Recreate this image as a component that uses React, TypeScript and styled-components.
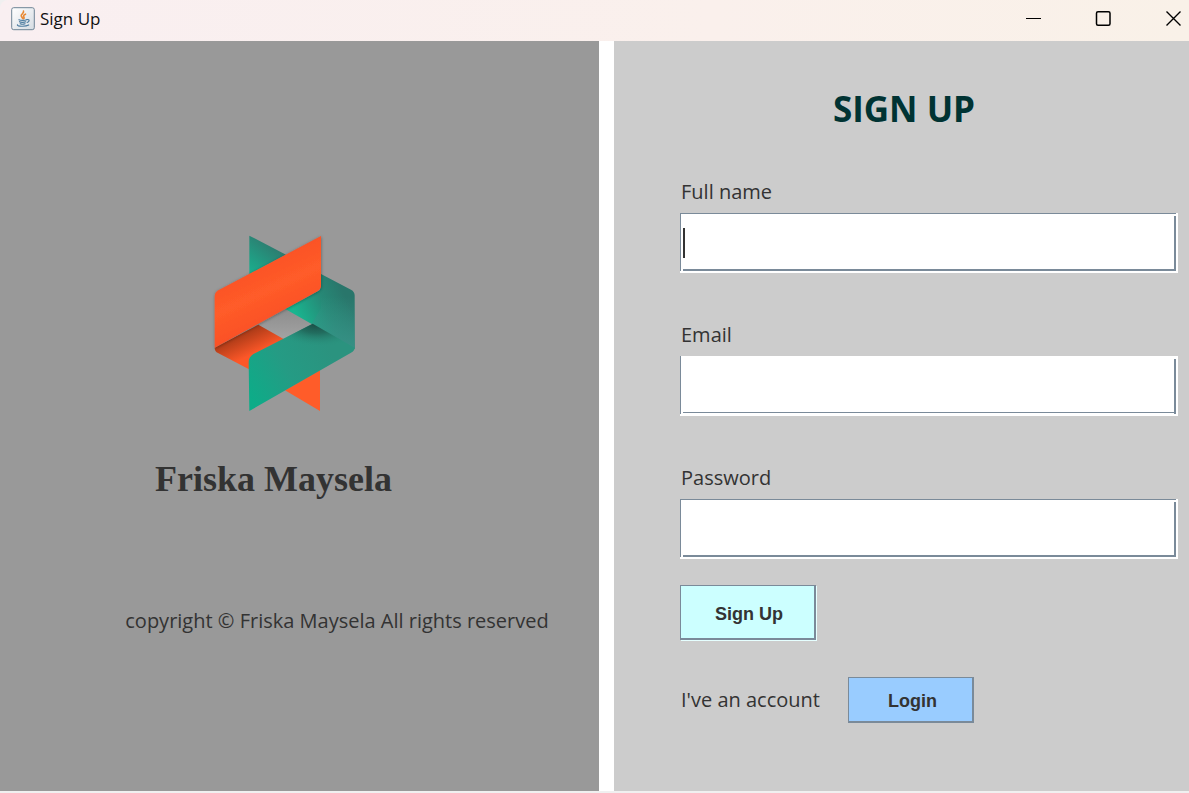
import React from "react";
import styled, { createGlobalStyle } from "styled-components";

const GlobalStyle = createGlobalStyle`
  * { box-sizing: border-box; }
  html, body, #root { height: 100%; }
  body { margin: 0; background: #f0f0f0; color: #333; font-family: "Open Sans", "Noto Sans", sans-serif; }
`;

const Window = styled.div`
  min-height: 100%;
  display: flex;
  flex-direction: column;
  padding-bottom: 2px;
`;

const TitleBar = styled.header`
  height: 41px;
  display: flex;
  align-items: flex-start;
  justify-content: space-between;
  padding: 6px 7px 0 11px;
  border-top-left-radius: 8px;
  background: linear-gradient(90deg, #f9eff1, #faf0ec 60%, #f9f1e8);
`;

const TitleGroup = styled.div`
  display: flex;
  align-items: center;
  gap: 5px;
`;

const Title = styled.span`
  font-size: 17px;
  line-height: 26px;
  color: #111;
`;

const Controls = styled.div`
  display: flex;
  gap: 53px;
  padding-top: 4px;
`;

const ControlButton = styled.button`
  width: 17px;
  height: 17px;
  padding: 0;
  border: 0;
  background: none;
  svg { display: block; }
`;

const Panels = styled.main`
  flex: 1;
  display: grid;
  grid-template-columns: 599fr 575fr;
  gap: 15px;
  background: #fff;
`;

const BrandPanel = styled.section`
  display: flex;
  flex-direction: column;
  align-items: center;
  padding-top: 184px;
  background: #999;
`;

const BrandLogo = styled.svg`
  width: 170px;
  height: 200px;
  margin-right: 29px;
`;

const BrandName = styled.h2`
  margin: 32px 52px 0 0;
  font: bold 36px/44px "Liberation Serif", serif;
`;

const Copyright = styled.p`
  margin: 106px 0 0 75px;
  font-size: 20px;
  line-height: 28px;
  white-space: nowrap;
`;

const FormPanel = styled.section`
  padding: 43px 11px 0 66px;
  background: #ccc;
`;

const Heading = styled.h1`
  margin: 0 50px 44px 0;
  font-size: 35px;
  line-height: 50px;
  text-align: center;
  color: #033;
`;

const Form = styled.form`
  display: flex;
  flex-direction: column;
  align-items: flex-start;
`;

const Fields = styled.div`
  width: 100%;
  display: flex;
  flex-direction: column;
  gap: 48px;
`;

const Field = styled.div`
  display: flex;
  flex-direction: column;
  gap: 7px;
`;

const Label = styled.label`
  padding-left: 1px;
  font-size: 20px;
  line-height: 28px;
`;

const line = "linear-gradient(#7a8a99, #7a8a99) no-repeat";

/* Etched frame: the four lines stop short of the corners; $flat thins the horizontal ones. */
const InputFrame = styled.div<{ $flat?: boolean }>`
  position: relative;
  height: 60px;
  padding: 1px 4px 4px 1px;
  background:
    ${line} 0 0 / calc(100% - 2px) ${(p) => (p.$flat ? 0 : 1)}px,
    ${line} 0 0 / 1px 58px,
    ${line} right 2px top 3px / 2px 55px,
    ${line} 3px 56px / calc(100% - 5px) ${(p) => (p.$flat ? 1 : 2)}px,
    #fff;
`;

const Input = styled.input`
  display: block;
  width: 100%;
  height: 100%;
  padding: 0 2px;
  border: 0;
  outline: 0;
  background: transparent;
  color: #333;
  font: 24px/30px "Open Sans", sans-serif;
`;

const TextCursor = styled.span`
  position: absolute;
  left: 3px;
  top: 15px;
  width: 2px;
  height: 30px;
  background: #333;
`;

const Button = styled.button<{ $primary?: boolean }>`
  width: ${(p) => (p.$primary ? 136 : 126)}px;
  height: ${(p) => (p.$primary ? 55 : 46)}px;
  padding: ${(p) => (p.$primary ? "4px 0 0 3px" : "2px 0 0 4px")};
  border: solid #7a8a99;
  border-width: 1px 2px 2px 1px;
  border-radius: 0;
  background: ${(p) => (p.$primary ? "#cff" : "#9cf")};
  box-shadow: ${(p) => (p.$primary ? "1px 1px 0 #e6ffff" : "none")};
  color: #333;
  font: bold 18px/24px "Liberation Sans", sans-serif;
`;

const SubmitRow = styled.div`
  margin-top: 26px;
`;

const AccountRow = styled.div`
  display: flex;
  align-items: center;
  gap: 28px;
  margin-top: 37px;
  padding-left: 1px;
  font-size: 20px;
  line-height: 28px;
`;

const JavaIcon = () => (
  <svg width="24" height="24" viewBox="0 0 24 24" fill="none" aria-hidden="true">
    <defs>
      <linearGradient id="tile" x1="0" y1="0" x2="1" y2="1">
        <stop stopColor="#fff" />
        <stop offset="1" stopColor="#d5dce2" />
      </linearGradient>
    </defs>
    <rect x=".7" y=".7" width="22.6" height="22" rx="2" fill="url(#tile)" stroke="#6d8495" />
    <path d="M12.5 4c1 2.6-3.4 3-2.2 5.3.4.9 1.2 1.3 1.5 2.2M14.5 7.2c-2 1-2.5 1.7-1.5 2.900.5.7.1 1.2-.4 1.6" stroke="#e98a35" strokeWidth="1.6" strokeLinecap="round" />
    <path d="M8 12.700c1.500.8 6 .8 7.500 0M8.500 14.700c1 .8 4.600.9 6.200.1M9.200 16.700c1.300.6 3.400.6 4.800 0M16 12.600c3-.6 2.600 2.200.2 2.900M6.500 17.800c-1 1.800 8.500 2 11.200.2" stroke="#4d7da0" strokeWidth="1.2" strokeLinecap="round" />
  </svg>
);

const Logo = () => (
  <BrandLogo viewBox="0 0 510 600" role="img" aria-label="Friska Maysela logo">
    <defs>
      <linearGradient id="topTeal" gradientUnits="userSpaceOnUse" x1="215" y1="60" x2="150" y2="145">
        <stop stopColor="#2d7d70" />
        <stop offset="1" stopColor="#19b08f" />
      </linearGradient>
      <linearGradient id="orange" gradientUnits="userSpaceOnUse" x1="170" y1="120" x2="240" y2="270">
        <stop stopColor="#fb5226" />
        <stop offset=".5" stopColor="#ff5c29" />
        <stop offset="1" stopColor="#fb5125" />
      </linearGradient>
      <linearGradient id="rightTeal" gradientUnits="userSpaceOnUse" x1="290" y1="270" x2="430" y2="200">
        <stop stopColor="#19b58f" />
        <stop offset=".55" stopColor="#268a77" />
        <stop offset="1" stopColor="#29766b" />
      </linearGradient>
      <linearGradient id="rightLight" x1="0" y1="0" x2="0" y2="1">
        <stop offset=".3" stopColor="#379085" stopOpacity="0" />
        <stop offset="1" stopColor="#379085" />
      </linearGradient>
      <linearGradient id="fold" gradientUnits="userSpaceOnUse" x1="150" y1="300" x2="185" y2="375">
        <stop stopColor="#9c3514" />
        <stop offset="1" stopColor="#fc5728" />
      </linearGradient>
      <linearGradient id="frontTeal" gradientUnits="userSpaceOnUse" x1="380" y1="360" x2="140" y2="500">
        <stop stopColor="#2b937f" />
        <stop offset=".5" stopColor="#259b84" />
        <stop offset="1" stopColor="#0dac88" />
      </linearGradient>
      <radialGradient id="foldShade" gradientUnits="userSpaceOnUse" cx="0" cy="0" r="1" gradientTransform="translate(345 298) rotate(4) scale(135 66)">
        <stop stopColor="#1b4e46" />
        <stop offset=".4" stopColor="#1f6054" stopOpacity=".75" />
        <stop offset="1" stopColor="#28917d" stopOpacity="0" />
      </radialGradient>
      <linearGradient id="hole" x1="0" y1="0" x2="0" y2="1">
        <stop stopColor="#8c8c8c" />
        <stop offset="1" stopColor="#a3a3a3" />
      </linearGradient>
      <filter id="shade" x="-10%" y="-10%" width="120%" height="120%">
        <feDropShadow dx="1" dy="2" stdDeviation="4" floodOpacity=".35" />
      </filter>
    </defs>
    <path d="M148 32 258 89 148 148Z" fill="url(#topTeal)" />
    <path d="M258 250 175 299 250 342 338 297Z" fill="url(#hole)" />
    <path d="M363 147 453 194Q464 200 464 211V372L335 297 256 252 360 195Z" fill="url(#rightTeal)" />
    <path d="M363 147 453 194Q464 200 464 211V372L335 297 363 250Z" fill="url(#rightLight)" />
    <path d="M44 368 175 299 252 343 165 386Q148 395 147 410V433L54 384Q44 380 44 368Z" fill="url(#fold)" />
    <path d="M255 496 360 435V558Z" fill="#ff5c29" />
    <path d="M363 33V183Q363 192 352 199L44 368V215Q44 202 55 196Z" fill="url(#orange)" filter="url(#shade)" />
    <path id="front" d="M338 296 464 368Q464 377 453 383L148 558 146 412Q146 396 160 387Z" fill="url(#frontTeal)" />
    <path d="M338 296 464 368Q464 377 453 383L148 558 146 412Q146 396 160 387Z" fill="url(#foldShade)" />
  </BrandLogo>
);

export default function App() {
  return (
    <>
      <GlobalStyle />
      <Window>
        <TitleBar>
          <TitleGroup>
            <JavaIcon />
            <Title>Sign Up</Title>
          </TitleGroup>
          <Controls>
            <ControlButton aria-label="Minimize">
              <svg width="17" height="17" stroke="#000"><path d="M1 8.500h15" /></svg>
            </ControlButton>
            <ControlButton aria-label="Maximize">
              <svg width="17" height="17" fill="none" stroke="#000" strokeWidth="1.500"><rect x="1.500" y="1.700" width="13.500" height="13.500" rx="1.500" /></svg>
            </ControlButton>
            <ControlButton aria-label="Close">
              <svg width="17" height="17" stroke="#000" strokeWidth="1.400"><path d="m1.500 1.500 14 14m0-14-14 14" /></svg>
            </ControlButton>
          </Controls>
        </TitleBar>
        <Panels>
          <BrandPanel>
            <Logo />
            <BrandName>Friska Maysela</BrandName>
            <Copyright>copyright © Friska Maysela All rights reserved</Copyright>
          </BrandPanel>
          <FormPanel>
            <Heading>SIGN UP</Heading>
            <Form onSubmit={(e) => e.preventDefault()}>
              <Fields>
                <Field>
                  <Label htmlFor="name">Full name</Label>
                  <InputFrame>
                    <Input id="name" type="text" />
                    <TextCursor />
                  </InputFrame>
                </Field>
                <Field>
                  <Label htmlFor="email">Email</Label>
                  <InputFrame $flat><Input id="email" type="email" /></InputFrame>
                </Field>
                <Field>
                  <Label htmlFor="password">Password</Label>
                  <InputFrame><Input id="password" type="password" /></InputFrame>
                </Field>
              </Fields>
              <SubmitRow><Button $primary type="submit">Sign Up</Button></SubmitRow>
              <AccountRow>
                <span>I've an account</span>
                <Button type="button">Login</Button>
              </AccountRow>
            </Form>
          </FormPanel>
        </Panels>
      </Window>
    </>
  );
}
